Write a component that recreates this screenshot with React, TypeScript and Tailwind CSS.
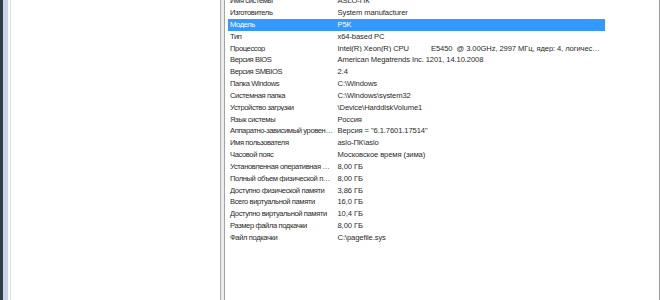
const rows: [string, string][] = [
  ["Имя системы", "ASLO-ПК"],
  ["Изготовитель", "System manufacturer"],
  ["Модель", "P5K"],
  ["Тип", "x64-based PC"],
  ["Процессор", "Intel(R) Xeon(R) CPU           E5450  @ 3.00GHz, 2997 МГц, ядер: 4, логических процессоров: 4"],
  ["Версия BIOS", "American Megatrends Inc. 1201, 14.10.2008"],
  ["Версия SMBIOS", "2.4"],
  ["Папка Windows", "C:\\Windows"],
  ["Системная папка", "C:\\Windows\\system32"],
  ["Устройство загрузки", "\\Device\\HarddiskVolume1"],
  ["Язык системы", "Россия"],
  ["Аппаратно-зависимый уровень (HAL)", "Версия = \"6.1.7601.17514\""],
  ["Имя пользователя", "aslo-ПК\\aslo"],
  ["Часовой пояс", "Московское время (зима)"],
  ["Установленная оперативная память (RAM)", "8,00 ГБ"],
  ["Полный объем физической памяти", "8,00 ГБ"],
  ["Доступно физической памяти", "3,86 ГБ"],
  ["Всего виртуальной памяти", "16,0 ГБ"],
  ["Доступно виртуальной памяти", "10,4 ГБ"],
  ["Размер файла подкачки", "8,00 ГБ"],
  ["Файл подкачки", "C:\\pagefile.sys"],
];

export default function App() {
  return (
    <div
      className="flex h-[300px] w-[660px] overflow-hidden bg-white"
      style={{ fontFamily: '"Liberation Sans", Arial, sans-serif' }}
    >
      {/* desktop + window frame */}
      <div className="w-[3px] bg-[#2f3d45]" />
      <div className="w-[5px] bg-[#c6d4ec]" />
      <div className="w-[2px] bg-white" />

      {/* tree pane (empty part) */}
      <div className="w-[211px] border-l border-r border-l-[#d8e2f0] border-r-[#ababab] bg-white" />

      {/* splitter */}
      <div className="w-[3px] bg-[#ececec]" />

      {/* details list */}
      <div className="w-[436px] border-l border-r border-l-[#a3a3a3] border-r-[#9a9a9a] bg-white">
        <div className="-mt-[5px] pl-[3px]">
          {rows.map(([name, value], i) => {
            const selected = i === 2;
            return (
              <div
                key={i}
                className={`flex h-[11.85px] w-[377px] items-center text-[7.6px] leading-none ${
                  selected ? "bg-[#3399ff] text-white" : "text-[#2a2a2a]"
                }`}
              >
                <div className="w-[107px] shrink-0 overflow-hidden text-ellipsis whitespace-nowrap pl-[2px] pr-[2px] tracking-[-0.4px]">
                  {name}
                </div>
                <div className="w-[270px] shrink-0 overflow-hidden text-ellipsis whitespace-pre pl-[2.5px] pr-[4px] tracking-[-0.1px]">
                  {value}
                </div>
              </div>
            );
          })}
        </div>
      </div>
    </div>
  );
}
